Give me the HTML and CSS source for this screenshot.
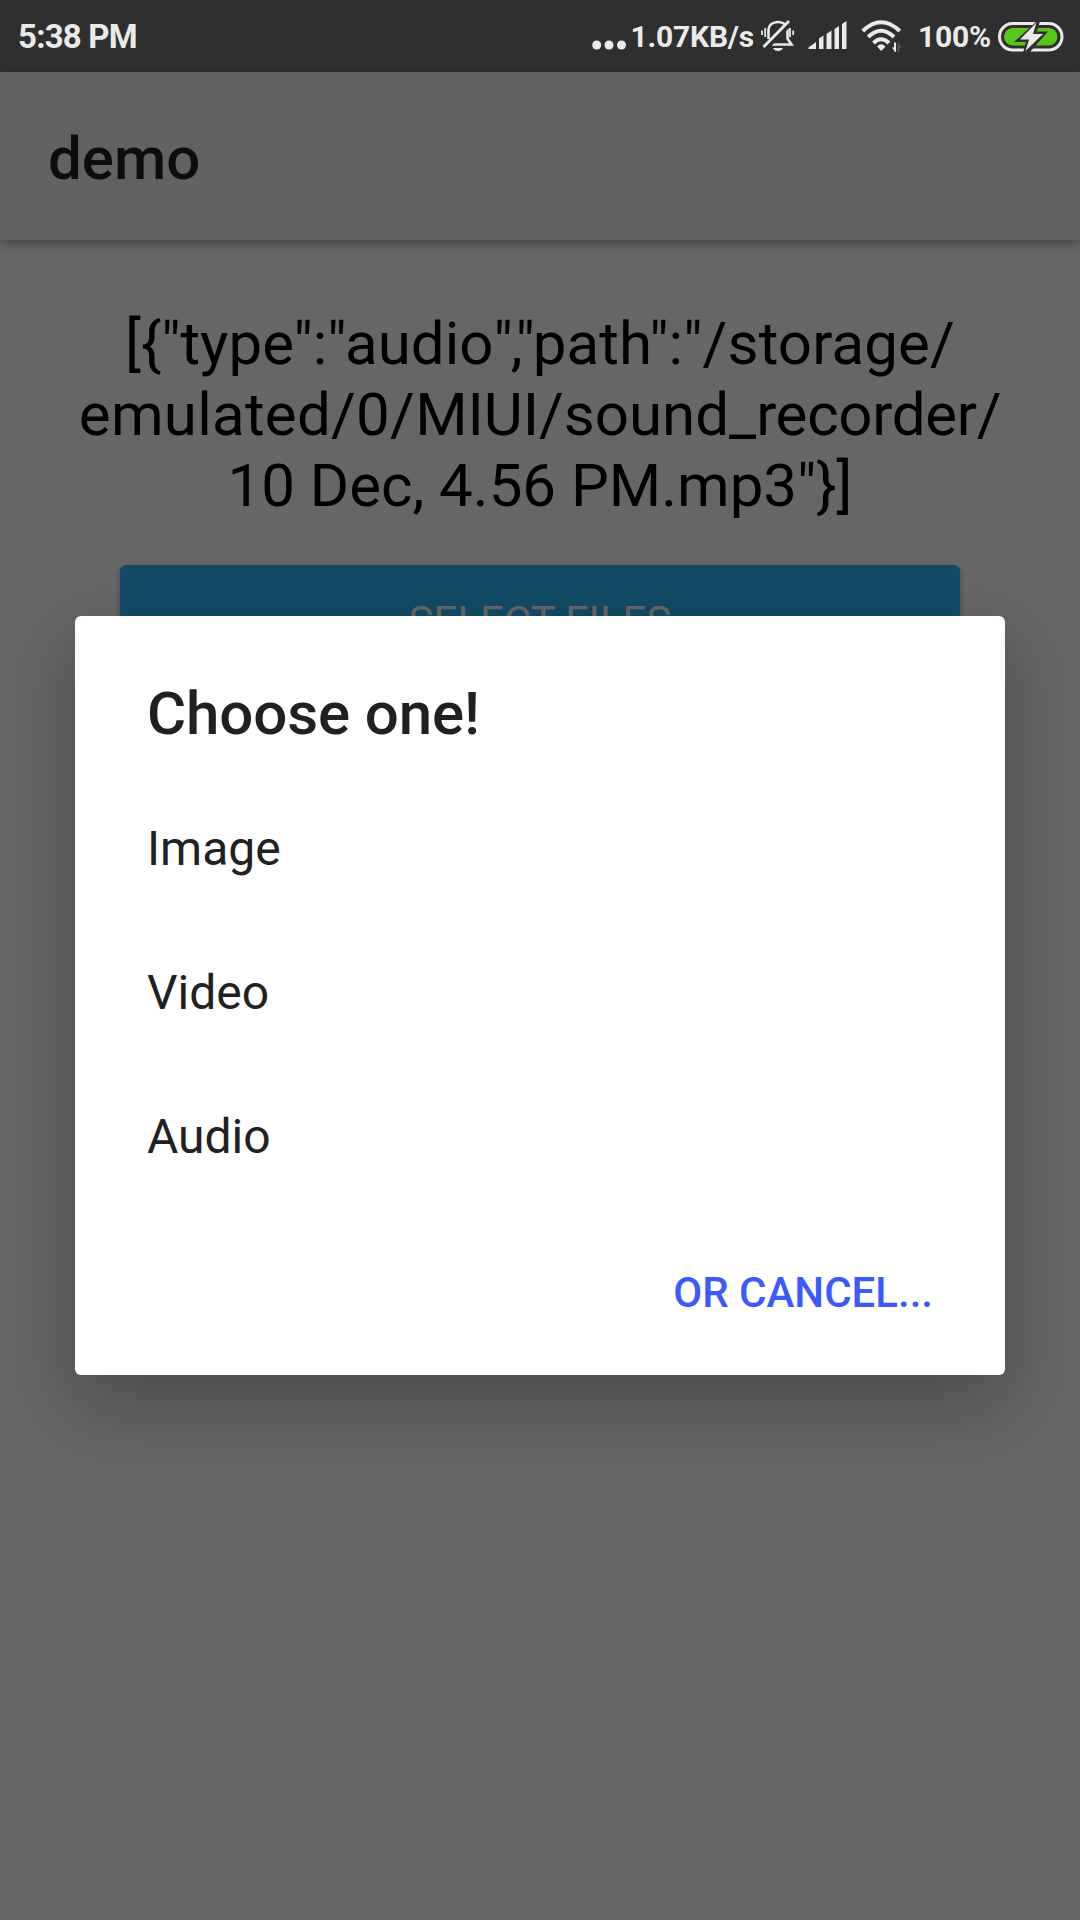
FILE: index.html
```html
<!DOCTYPE html>
<html lang="en">
<head>
<meta charset="utf-8">
<title>demo</title>
<link rel="stylesheet" href="styles.css">
</head>
<body>
<div class="screen">
  <header class="status">
    <span class="clock">5:38 PM</span>
    <div class="indicators">
      <svg class="dots" width="34" height="10" viewBox="0 0 34 10"><circle cx="4.7" cy="5" r="4.5"/><circle cx="17" cy="5" r="4.5"/><circle cx="29.5" cy="5" r="4.5"/></svg>
      <span class="speed">1.07KB/s</span>
      <svg class="bell" width="34" height="34" viewBox="0 0 34 34" fill="none" stroke="#eaeaea">
        <path d="M11 26.500H30.500L26.500 20.500V13C26.500 7 22.500 4 17 4S7.500 7 7.500 13V21" stroke-width="2.600"/>
        <path d="M12 30H22C20.500 34 13.500 34 12 30Z" fill="#eaeaea" stroke="none"/>
        <path d="M4.200 10V19M1 12.500V17M29 10V19M32.200 12.500V17" stroke-width="1.800"/>
        <path d="M5 30.500L30 5" stroke="#2f2f2f" stroke-width="4"/>
        <path d="M2.500 29L28 3" stroke-width="2.800"/>
      </svg>
      <svg class="signal" width="40" height="30" viewBox="0 0 40 30"><path d="M0.500 28V26.500L8 21V28ZM11 28V17.500L15.500 14.500V28ZM18.500 28V13L23.500 9.500V28ZM26.500 28V8L31 5V28ZM34 28V3L38.500 0V28Z"/></svg>
      <svg class="wifi" width="43" height="34" viewBox="0 0 43 34">
        <g fill="none" stroke="#eaeaea" stroke-width="4"><path d="M1.800 13Q20 -4.500 38.800 13"/><path d="M7.200 19Q20 6.500 33 19"/><path d="M12.500 25Q20 17.500 28 25"/></g>
        <path d="M16 28.500Q20.300 24 24.500 28.500L20.300 33Z"/>
        <path d="M31 29.500H33V24.500H35V34H34Z"/><path d="M36.500 34V24.500L41 29.500H38.500V34Z" fill="#555"/>
      </svg>
      <span class="percent">100%</span>
      <svg class="battery" width="66" height="32" viewBox="0 0 66 32">
        <rect x="1.500" y="2.500" width="62.500" height="26.500" rx="13.250" fill="none" stroke="#eaeaea" stroke-width="3"/>
        <rect x="6" y="7" width="53.500" height="17.500" rx="8.750" fill="#59c719"/>
        <path d="M39 0L16 21H28L25 32H31L50 10.500H39L42 0Z" fill="#2f2f2f"/>
        <path d="M38.500 1.500L22 18.500H31L27.500 30L45 13H35Z"/>
      </svg>
    </div>
  </header>
  <div class="appbar"><h1>demo</h1></div>
  <main class="content">
    <p class="result">[{"type":"audio<span class="comma">","</span><span class="path">path":"/storage/</span><br><span class="loose">emulated/0/</span>MIUI/sound_<span class="tight">recorder/</span><br>10 Dec, 4.56 PM.mp3"}]</p>
    <button class="select">SELECT FILES</button>
  </main>
  <section class="dialog">
    <h2>Choose one!</h2>
    <ul>
      <li>Image</li>
      <li>Video</li>
      <li>Audio</li>
    </ul>
    <div class="actions"><button class="cancel">OR CANCEL...</button></div>
  </section>
</div>
</body>
</html>
```
FILE: styles.css
```css
* { box-sizing: border-box; margin: 0; padding: 0; }
body { font-family: Roboto, sans-serif; background: #666; }
button { font-family: inherit; border: 0; }

.screen {
  position: relative;
  display: flex;
  flex-direction: column;
  width: 1080px;
  height: 1920px;
  overflow: hidden;
  background: #666;
}

.status {
  display: flex;
  justify-content: space-between;
  height: 72px;
  padding: 0 16px 0 18px;
  background: #2f2f2f;
  color: #eaeaea;
  font-size: 33px;
  font-weight: 700;
  letter-spacing: -.8px;
  line-height: 73px;
}
.indicators { display: flex; align-items: flex-start; letter-spacing: -.2px; }
.indicators svg { display: block; flex: none; fill: #eaeaea; }
.indicators .dots { margin: 40px 4px 0 0; }
.indicators .bell { margin: 18px 13px 0 7px; fill: none; }
.indicators .signal { margin: 21px 13px 0 0; }
.indicators .wifi { margin: 18px 14px 0 0; }
.indicators .battery { margin: 21px 0 0 7px; }
.speed, .percent { font-size: 30px; line-height: 73px; }

.appbar {
  position: relative;
  height: 168px;
  padding: 5px 48px 0;
  background: #626262;
  box-shadow: 0 4px 10px rgba(0, 0, 0, .32);
  color: #0d0d0d;
}
.appbar h1 { font-size: 60px; font-weight: 500; line-height: 163px; }

.content {
  display: flex;
  flex-direction: column;
  align-items: center;
  gap: 44px;
  padding-top: 68px;
}
.result { color: #000; font-size: 60px; line-height: 71px; text-align: center; white-space: nowrap; }
.loose { letter-spacing: .28px; }
.path { letter-spacing: .14px; }
.tight { letter-spacing: -.3px; }
.comma { letter-spacing: -2px; }
.select {
  width: 840px;
  height: 112px;
  border-radius: 6px;
  background: #134b66;
  box-shadow: 0 2px 5px rgba(0, 0, 0, .3);
  color: #666;
  font-size: 42px;
}

.dialog {
  position: absolute;
  left: 75px;
  top: 616px;
  width: 930px;
  height: 759px;
  padding: 62px 72px 0;
  border-radius: 6px;
  background: #fff;
  box-shadow: 0 28px 72px rgba(0, 0, 0, .27);
  color: #212121;
}
.dialog h2 { margin-bottom: 28px; font-size: 60px; font-weight: 500; line-height: 71px; letter-spacing: -.1px; }
.dialog ul { list-style: none; }
.dialog li { height: 144px; font-size: 48px; line-height: 144px; }
.actions { display: flex; justify-content: flex-end; }
.cancel { background: none; color: #3d5afe; font-size: 42px; font-weight: 500; line-height: 167px; }
```
